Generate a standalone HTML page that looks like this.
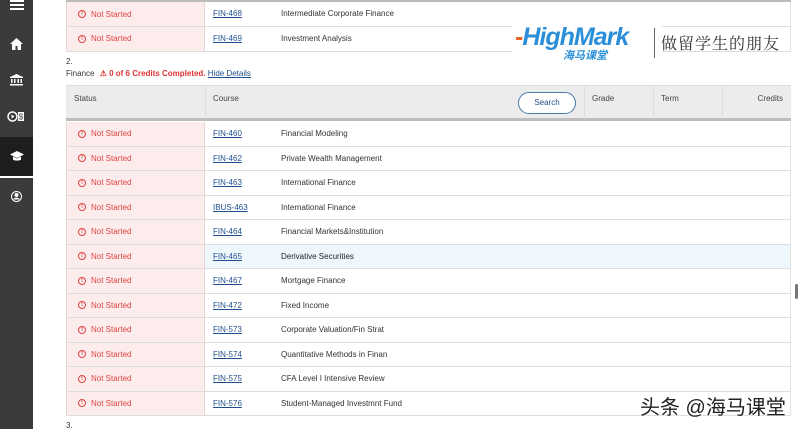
<!DOCTYPE html>
<html><head><meta charset="utf-8"><style>
*{margin:0;padding:0;box-sizing:border-box}
body{width:800px;height:429px;overflow:hidden;background:#fff;font-family:"Liberation Sans",sans-serif;font-size:8px;color:#333;position:relative}
.sb{position:absolute;left:0;top:0;width:33px;height:429px;background:#3b3b3b}
.act{position:absolute;left:0;top:137px;width:33px;height:40px;background:#1e1e1e}
.ic{position:absolute;left:10px}
.row{position:absolute;left:66px;width:725px;height:24.5px;border-bottom:1px solid #ddd;border-right:1px solid #e2e2e2}
.st{position:absolute;left:0;top:0;width:139px;height:100%;background:#fcecec;border-right:1px solid #e6d6d6;border-left:1px solid #e6d6d6;color:#d44;display:flex;align-items:center;padding-left:11px}
.st b{display:block;width:8px;height:8px;border:1px solid #d44;border-radius:50%;font-size:6px;line-height:6px;text-align:center;font-weight:bold;margin-right:5px}
.c{position:absolute;left:147px;line-height:24px;color:#1f4e8c;text-decoration:underline}
.n{position:absolute;left:215px;line-height:24px;color:#333}
.hd{position:absolute;left:66px;top:85px;width:725px;height:36px;background:#ececec;border-bottom:3px solid #bdbdbd;border-top:1px solid #ddd}
.hd span{position:absolute;top:8px;color:#444}
.vl{position:absolute;top:0;width:1px;height:33px;background:#ddd}
</style></head><body>
<div class="sb"></div><div class="act"></div>
<div style="position:absolute;left:0;top:176px;width:33px;height:2px;background:#fff"></div>
<svg class="ic" style="top:0" width="14" height="12" viewBox="0 0 14 12"><rect x="0" y="0" width="14" height="2" fill="#fff"/><rect x="0" y="4" width="14" height="2" fill="#fff"/><rect x="0" y="8" width="14" height="2" fill="#fff"/></svg>
<svg class="ic" style="top:38px" width="13" height="12" viewBox="0 0 13 12"><path d="M6.5 0L0 6h2v6h3.5V8h2v4H11V6h2z" fill="#fff"/></svg>
<svg class="ic" style="top:74px" width="13" height="12" viewBox="0 0 13 12"><path d="M6.5 0L0 3v1h13V3z" fill="#fff"/><rect x="1" y="5" width="1.5" height="4" fill="#fff"/><rect x="4" y="5" width="1.5" height="4" fill="#fff"/><rect x="7.5" y="5" width="1.5" height="4" fill="#fff"/><rect x="10.5" y="5" width="1.5" height="4" fill="#fff"/><rect x="0" y="10" width="13" height="1.5" fill="#fff"/></svg>
<svg class="ic" style="top:111px;left:7px" width="18" height="11" viewBox="0 0 18 11"><circle cx="5.5" cy="5.5" r="4.5" fill="none" stroke="#fff" stroke-width="1.5"/><path d="M4.5 3.5v4l3-2z" fill="#fff"/><rect x="11" y="1" width="6" height="9" fill="#fff"/><text x="14" y="8.5" font-size="8" text-anchor="middle" fill="#3b3b3b" font-family="Liberation Sans">$</text></svg>
<svg class="ic" style="top:151px" width="14" height="11" viewBox="0 0 14 11"><path d="M7 0L0 3.5 7 7l7-3.5z" fill="#fff"/><path d="M3 5.5v3c1 1.5 7 1.5 8 0v-3L7 7.5z" fill="#fff"/></svg>
<svg class="ic" style="top:191px;left:11px" width="11" height="11" viewBox="0 0 11 11"><circle cx="5.5" cy="5.5" r="5" fill="none" stroke="#fff" stroke-width="1"/><circle cx="5.5" cy="4" r="2" fill="#fff"/><path d="M2.2 8.5c1-2.5 5.6-2.5 6.6 0z" fill="#fff"/></svg>

<div class="row" style="top:2px;height:25px"><div class="st"><b>!</b>Not Started</div><span class="c">FIN-468</span><span class="n">Intermediate Corporate Finance</span></div>
<div class="row" style="top:27px"><div class="st"><b>!</b>Not Started</div><span class="c">FIN-469</span><span class="n">Investment Analysis</span></div>
<div style="position:absolute;left:66px;top:0;width:725px;height:2px;background:#bbb"></div>
<div style="position:absolute;left:66px;top:57px">2.</div>
<div style="position:absolute;left:66px;top:69px">Finance <span style="color:#d33;font-weight:bold;margin-left:3px">⚠ 0 of 6 Credits Completed.</span> <span style="color:#1f4e8c;text-decoration:underline">Hide Details</span></div>
<div class="hd"><span style="left:8px">Status</span><span style="left:147px">Course</span>
<div style="position:absolute;left:452px;top:6px;width:58px;height:22px;border:1px solid #4a7ab0;border-radius:11px;background:#fff;color:#1f4e8c;text-align:center;line-height:20px">Search</div>
<div class="vl" style="left:139px"></div><div class="vl" style="left:518px"></div><div class="vl" style="left:587px"></div><div class="vl" style="left:656px"></div>
<span style="left:526px">Grade</span><span style="left:595px">Term</span><span style="right:8px">Credits</span></div>

<div class="row" style="top:122px"><div class="st"><b>!</b>Not Started</div><span class="c">FIN-460</span><span class="n">Financial Modeling</span></div>
<div class="row" style="top:146.5px"><div class="st"><b>!</b>Not Started</div><span class="c">FIN-462</span><span class="n">Private Wealth Management</span></div>
<div class="row" style="top:171px"><div class="st"><b>!</b>Not Started</div><span class="c">FIN-463</span><span class="n">International Finance</span></div>
<div class="row" style="top:195.5px"><div class="st"><b>!</b>Not Started</div><span class="c">IBUS-463</span><span class="n">International Finance</span></div>
<div class="row" style="top:220px"><div class="st"><b>!</b>Not Started</div><span class="c">FIN-464</span><span class="n">Financial Markets&amp;Institution</span></div>
<div class="row" style="top:244.5px;background:#eef7fb"><div class="st"><b>!</b>Not Started</div><span class="c">FIN-465</span><span class="n" style="color:#222">Derivative Securities</span></div>
<div class="row" style="top:269px"><div class="st"><b>!</b>Not Started</div><span class="c">FIN-467</span><span class="n">Mortgage Finance</span></div>
<div class="row" style="top:293.5px"><div class="st"><b>!</b>Not Started</div><span class="c">FIN-472</span><span class="n">Fixed Income</span></div>
<div class="row" style="top:318px"><div class="st"><b>!</b>Not Started</div><span class="c">FIN-573</span><span class="n">Corporate Valuation/Fin Strat</span></div>
<div class="row" style="top:342.5px"><div class="st"><b>!</b>Not Started</div><span class="c">FIN-574</span><span class="n">Quantitative Methods in Finan</span></div>
<div class="row" style="top:367px"><div class="st"><b>!</b>Not Started</div><span class="c">FIN-575</span><span class="n">CFA Level I Intensive Review</span></div>
<div class="row" style="top:391.5px"><div class="st"><b>!</b>Not Started</div><span class="c">FIN-576</span><span class="n">Student-Managed Investmnt Fund</span></div>
<div style="position:absolute;left:66px;top:421px">3.</div>
<div style="position:absolute;left:795px;top:284px;width:3px;height:15px;background:#777;border-radius:2px"></div>

<div style="position:absolute;left:512px;top:22px;width:150px;height:40px;background:#fff"></div>
<div style="position:absolute;left:515px;top:23px;font-size:25px;font-style:italic;font-weight:bold;color:#2a8fd8;letter-spacing:-1px"><span style="color:#e8642a">-</span>HighMark</div>
<div style="position:absolute;left:563px;top:47px;font-size:11px;font-weight:bold;font-style:italic;color:#2a8fd8;font-family:'Noto Sans CJK SC',sans-serif">海马课堂</div>
<div style="position:absolute;left:654px;top:28px;width:1px;height:30px;background:#666"></div>
<div style="position:absolute;left:661px;top:31px;font-size:16px;color:#333;letter-spacing:1px;font-family:'Noto Serif CJK SC',serif">做留学生的朋友</div>
<div style="position:absolute;left:640px;top:391px;font-size:20px;color:#222;font-family:'Liberation Sans','Noto Sans CJK SC',sans-serif;text-shadow:0 0 2px #fff,0 0 2px #fff">头条 @海马课堂</div>
</body></html>
